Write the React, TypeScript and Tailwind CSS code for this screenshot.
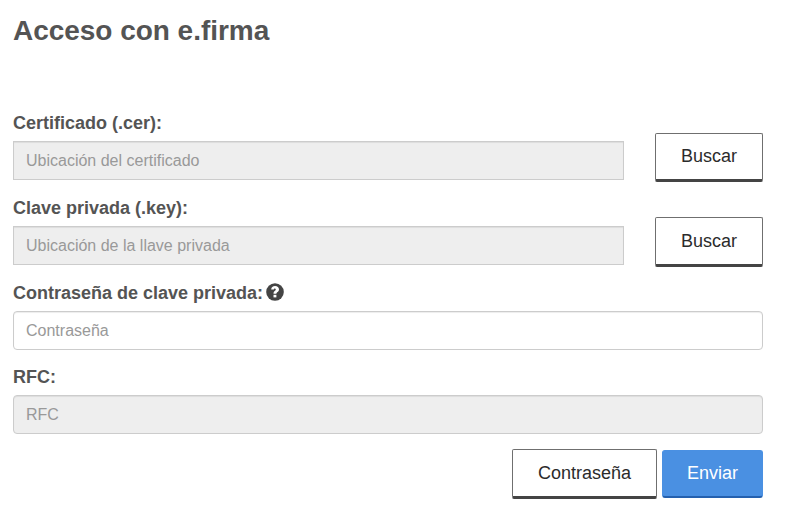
import { useState } from 'react';

const label = 'block text-[18px] leading-[26px] font-bold text-[#545454]';
const input = 'block border border-[#cccccc] px-3 text-[16px] text-[#545454] shadow-[inset_0_1px_1px_rgba(0,0,0,0.075)] placeholder:text-[#999999] placeholder:opacity-100 outline-none';
const outlineButton = 'border border-b-[3px] border-[#6f6f6f] border-b-[#444444] rounded-[2px] bg-white text-[18px] text-[#2b2b2b]';

const files = [
  { id: 'cer', title: 'Certificado (.cer):', placeholder: 'Ubicación del certificado', button: 'mt-[23px] h-[49px]' },
  { id: 'key', title: 'Clave privada (.key):', placeholder: 'Ubicación de la llave privada', button: 'mt-[22px] h-[50px]' },
];

function HelpIcon() {
  return (
    <svg className="mb-[3px] ml-[3px] h-[18px] w-[18px]" viewBox="0 0 18 18" aria-label="Ayuda">
      <circle cx="9" cy="9" r="8.8" fill="#444444" />
      <path d="M5.2 6.6C5.2 4.2 6.8 3 9.1 3c2.2 0 3.9 1.3 3.9 3.4 0 2.6-2.6 2.5-2.6 4.3H7.5c0-2.9 2.3-2.8 2.3-4.2 0-.6-.4-.9-.9-.9-.7 0-1 .4-1 1z" fill="#fff" />
      <path d="M7.5 11.8h2.9v2.6H7.5z" fill="#fff" />
    </svg>
  );
}

export default function App() {
  const [password, setPassword] = useState('');

  return (
    <main className="h-[518px] w-full bg-white pl-[13px] pr-[39px] pt-[14px] font-['Liberation_Sans',Arial,sans-serif]">
      <h1 className="text-[28px] leading-[34px] font-bold tracking-[-0.03px] text-[#545454]">Acceso con e.firma</h1>

      <form className="pt-[62px]" onSubmit={(e) => e.preventDefault()}>
        {files.map(({ id, title, placeholder, button }) => (
          <div key={id} className="flex h-[85px] items-start justify-between">
            <div>
              <label htmlFor={id} className={label}>{title}</label>
              <input id={id} disabled placeholder={placeholder} className={`${input} mt-[5px] h-[39px] w-[611px] bg-[#eeeeee]`} />
            </div>
            <button type="button" className={`${outlineButton} ${button} w-[108px]`}>Buscar</button>
          </div>
        ))}

        <div className="h-[84px]">
          <label htmlFor="password" className={`${label} flex! items-center`}>
            Contraseña de clave privada:
            <HelpIcon />
          </label>
          <input
            id="password"
            type="password"
            placeholder="Contraseña"
            value={password}
            onChange={(e) => setPassword(e.target.value)}
            className={`${input} mt-[5px] h-[39px] w-full rounded-[4px] bg-white`}
          />
        </div>

        <div>
          <label htmlFor="rfc" className={label}>RFC:</label>
          <input id="rfc" disabled placeholder="RFC" className={`${input} mt-[5px] h-[39px] w-full rounded-[4px] bg-[#eeeeee]`} />
        </div>

        <div className="mt-[15px] flex justify-end gap-[5px]">
          <button type="button" className={`${outlineButton} h-[50px] w-[145px]`}>Contraseña</button>
          <button type="submit" className="mt-px h-[48px] w-[101px] rounded-[3px] border border-b-2 border-[#4a90e2] border-b-[#2460ae] bg-[#4a90e2] text-[18px] text-white">Enviar</button>
        </div>
      </form>
    </main>
  );
}
